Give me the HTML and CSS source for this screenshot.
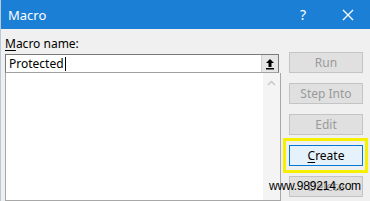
FILE: index.html
```html
<!DOCTYPE html>
<html>
<head>
<meta charset="utf-8">
<link rel="stylesheet" href="styles.css">
</head>
<body>
<div class="window">
  <div class="titlebar">
    <span class="title">Macro</span>
    <span class="help">?</span>
    <span class="close">
      <svg width="12" height="12" viewBox="0 0 12 12"><path d="M1 1L11 11M11 1L1 11" stroke="#fff" stroke-width="1.3" fill="none"/></svg>
    </span>
  </div>
  <div class="content">
    <div class="left">
      <div class="label"><u>M</u>acro name:</div>
      <div class="namebox">
        <span class="nametext">Protected</span><span class="caret"></span>
        <span class="upbtn">
          <svg width="10" height="12" viewBox="0 0 10 12"><path d="M5 1L1 5H3.5V9H6.5V5H9Z" fill="#000"/><rect x="1" y="10" width="8" height="1.5" fill="#000"/></svg>
        </span>
      </div>
      <div class="listbox">
        <div class="listarea"></div>
        <div class="scroll">
          <svg width="9" height="6" viewBox="0 0 9 6"><path d="M1 5L4.5 1.5L8 5" stroke="#c8c8c8" stroke-width="1.5" fill="none"/></svg>
        </div>
      </div>
    </div>
    <div class="right">
      <div class="btn disabled">Run</div>
      <div class="btn disabled">Step Into</div>
      <div class="btn disabled">Edit</div>
      <div class="btn focused"><u>C</u>reate<span class="highlight"></span></div>
      <div class="btn disabled">Delete</div>
    </div>
  </div>
  <div class="watermark">www.989214.com</div>
</div>
</body>
</html>
```

FILE: styles.css
```css
html, body {
  margin: 0;
  padding: 0;
}
body {
  width: 370px;
  height: 201px;
  overflow: hidden;
  background: #f0f0f0;
  font-family: "Noto Sans", "Open Sans", sans-serif;
  font-size: 12px;
}
.window {
  position: relative;
  width: 370px;
  height: 201px;
  overflow: hidden;
  background: #f0f0f0;
  border-left: 1px solid #b9c9d9;
  box-sizing: border-box;
}
.titlebar {
  height: 29px;
  background: #1b7fd5;
  color: #fff;
  display: flex;
  align-items: center;
  padding-left: 7px;
}
.title {
  font-size: 13px;
  flex: 1;
}
.help {
  font-size: 14px;
  width: 14px;
  text-align: center;
  margin-right: 32px;
}
.close {
  width: 12px;
  height: 12px;
  margin-right: 16px;
  display: flex;
}
.content {
  display: flex;
  padding: 7px 0 0 4px;
}
.left {
  width: 276px;
  display: flex;
  flex-direction: column;
}
.label {
  height: 18px;
  line-height: 16px;
  color: #000;
  font-size: 12px;
}
.label u {
  text-underline-offset: 2px;
}
.namebox {
  height: 19px;
  box-sizing: border-box;
  border: 1px solid #7a7a7a;
  border-bottom-color: #a0a0a0;
  background: #fff;
  display: flex;
  align-items: center;
  padding-left: 3px;
  width: 274px;
}
.nametext {
  font-size: 12px;
  color: #000;
}
.caret {
  width: 1px;
  height: 14px;
  background: #000;
  margin-left: 1px;
}
.upbtn {
  margin-left: auto;
  width: 16px;
  height: 17px;
  background: #e6e6e6;
  border-left: 1px solid #d0d0d0;
  display: flex;
  align-items: center;
  justify-content: center;
}
.listbox {
  height: 128px;
  width: 276px;
  box-sizing: border-box;
  border: 1px solid #a8a8a8;
  border-top: none;
  background: #fff;
  display: flex;
}
.listarea {
  flex: 1;
}
.scroll {
  width: 17px;
  background: #f4f4f4;
  display: flex;
  justify-content: center;
  padding-top: 7px;
  box-sizing: border-box;
}
.right {
  margin-left: 8px;
  padding-top: 16px;
  display: flex;
  flex-direction: column;
  gap: 10px;
}
.btn {
  position: relative;
  width: 74px;
  height: 21px;
  flex: none;
  box-sizing: border-box;
  display: flex;
  align-items: center;
  justify-content: center;
  font-size: 12px;
}
.disabled {
  border: 1px solid #c4c4c4;
  color: #9a9a9a;
  background: #e0e0e0;
}
.focused {
  background: #e5f1fb;
  border: 1px solid #0078d7;
  color: #000;
}
.focused u {
  text-underline-offset: 2px;
}
.highlight {
  position: absolute;
  left: -7px;
  right: -6px;
  top: -8px;
  bottom: -8px;
  border: 3px solid #f5f000;
}
.watermark {
  position: absolute;
  left: 268px;
  top: 179px;
  font-family: "Liberation Sans", Arial, sans-serif;
  font-size: 12px;
  color: #000;
  letter-spacing: -0.2px;
}
```
